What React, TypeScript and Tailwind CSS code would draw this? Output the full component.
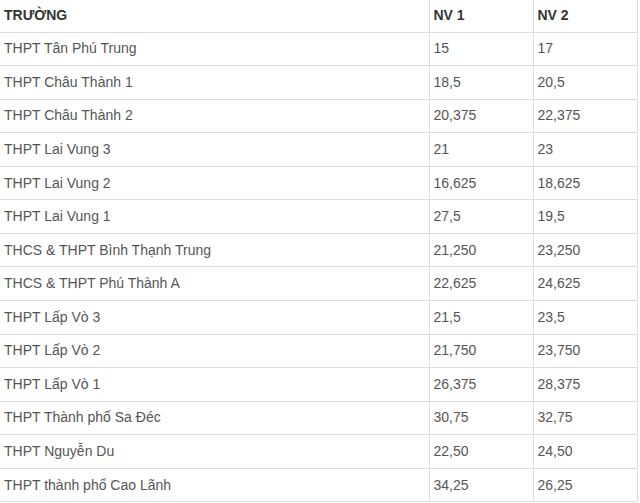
const rows: [string, string, string][] = [
  ['THPT Tân Phú Trung', '15', '17'],
  ['THPT Châu Thành 1', '18,5', '20,5'],
  ['THPT Châu Thành 2', '20,375', '22,375'],
  ['THPT Lai Vung 3', '21', '23'],
  ['THPT Lai Vung 2', '16,625', '18,625'],
  ['THPT Lai Vung 1', '27,5', '19,5'],
  ['THCS & THPT Bình Thạnh Trung', '21,250', '23,250'],
  ['THCS & THPT Phú Thành A', '22,625', '24,625'],
  ['THPT Lấp Vò 3', '21,5', '23,5'],
  ['THPT Lấp Vò 2', '21,750', '23,750'],
  ['THPT Lấp Vò 1', '26,375', '28,375'],
  ['THPT Thành phố Sa Đéc', '30,75', '32,75'],
  ['THPT Nguyễn Du', '22,50', '24,50'],
  ['THPT thành phố Cao Lãnh', '34,25', '26,25'],
];

export default function App() {
  return (
    <div className="bg-white w-[640px] h-[503px] overflow-hidden font-['Liberation_Sans',Arial,sans-serif] text-[14px]">
      <table className="w-[637px] border-collapse table-fixed">
        <colgroup>
          <col className="w-[429px]" />
          <col className="w-[104px]" />
          <col className="w-[104px]" />
        </colgroup>
        <thead>
          <tr className="h-[32px] border-b border-[#dddddd]">
            <th className="text-left font-bold text-[#333333] pl-[4px] border-r border-[#dddddd]">TRƯỜNG</th>
            <th className="text-left font-bold text-[#333333] pl-[4px] border-r border-[#dddddd]">NV 1</th>
            <th className="text-left font-bold text-[#333333] pl-[4px] border-r border-[#dddddd]">NV 2</th>
          </tr>
        </thead>
        <tbody>
          {rows.map(([name, a, b]) => (
            <tr key={name} className="h-[33.57px] border-b border-[#dddddd] text-[#555555]">
              <td className="pl-[4px] border-r border-[#dddddd]">{name}</td>
              <td className="pl-[4px] border-r border-[#dddddd]">{a}</td>
              <td className="pl-[4px] border-r border-[#dddddd]">{b}</td>
            </tr>
          ))}
        </tbody>
      </table>
    </div>
  );
}
